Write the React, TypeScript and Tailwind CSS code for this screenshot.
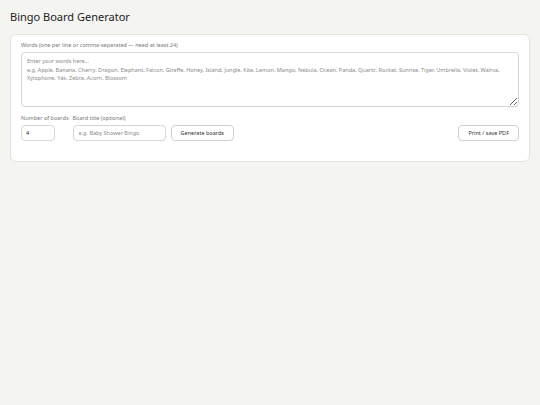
export default function App() {
  return (
    <div
      className="min-h-screen bg-[#f4f4f0] px-[10px] pt-[9px] text-[#222]"
      style={{ fontFamily: '"Noto Sans", "Open Sans", sans-serif' }}
    >
      <h1 className="text-[11px] leading-[15px] font-normal text-[#222]">Bingo Board Generator</h1>

      <div className="mt-[10px] rounded-[6px] border border-[#e3e3de] bg-white px-[10px] pt-[7px] pb-[20px]">
        <label className="block text-[5.5px] leading-[7px] text-[#777] mb-[3px]">
          Words (one per line or comma-separated — need at least 24)
        </label>
        <textarea
          className="block w-full h-[55px] rounded-[4px] border border-[#d6d6d6] bg-white px-[5px] py-[4px] text-[5.5px] leading-[8.5px] text-[#333] placeholder:text-[#8a8a8a] outline-none"
          placeholder={
            "Enter your words here...\ne.g. Apple, Banana, Cherry, Dragon, Elephant, Falcon, Giraffe, Honey, Island, Jungle, Kite, Lemon, Mango, Nebula, Ocean, Panda, Quartz, Rocket, Sunrise, Tiger, Umbrella, Violet, Walrus, Xylophone, Yak, Zebra, Acorn, Blossom"
          }
        />

        <div className="mt-[8px] flex items-end gap-[4px]">
          <div className="flex flex-col gap-[3px]">
            <label className="text-[5.5px] leading-[7px] text-[#777]">Number of boards</label>
            <input
              defaultValue="4"
              className="w-[34px] h-[16px] rounded-[4px] border border-[#d6d6d6] px-[4px] text-[5.5px] text-[#222] outline-none"
            />
          </div>
          <div className="flex flex-col gap-[3px]">
            <label className="text-[5.5px] leading-[7px] text-[#777]">Board title (optional)</label>
            <input
              placeholder="e.g. Baby Shower Bingo"
              className="w-[93px] h-[16px] rounded-[4px] border border-[#d6d6d6] px-[5px] text-[5.5px] text-[#222] placeholder:text-[#8a8a8a] outline-none"
            />
          </div>
          <button className="ml-[1px] h-[16px] rounded-[4px] border border-[#d0d0d0] bg-white px-[9px] text-[5.5px] font-normal text-[#333]">
            Generate boards
          </button>
          <button className="ml-auto h-[16px] rounded-[4px] border border-[#d0d0d0] bg-white px-[9px] text-[5.5px] font-normal text-[#333]">
            Print / save PDF
          </button>
        </div>
      </div>
    </div>
  )
}
